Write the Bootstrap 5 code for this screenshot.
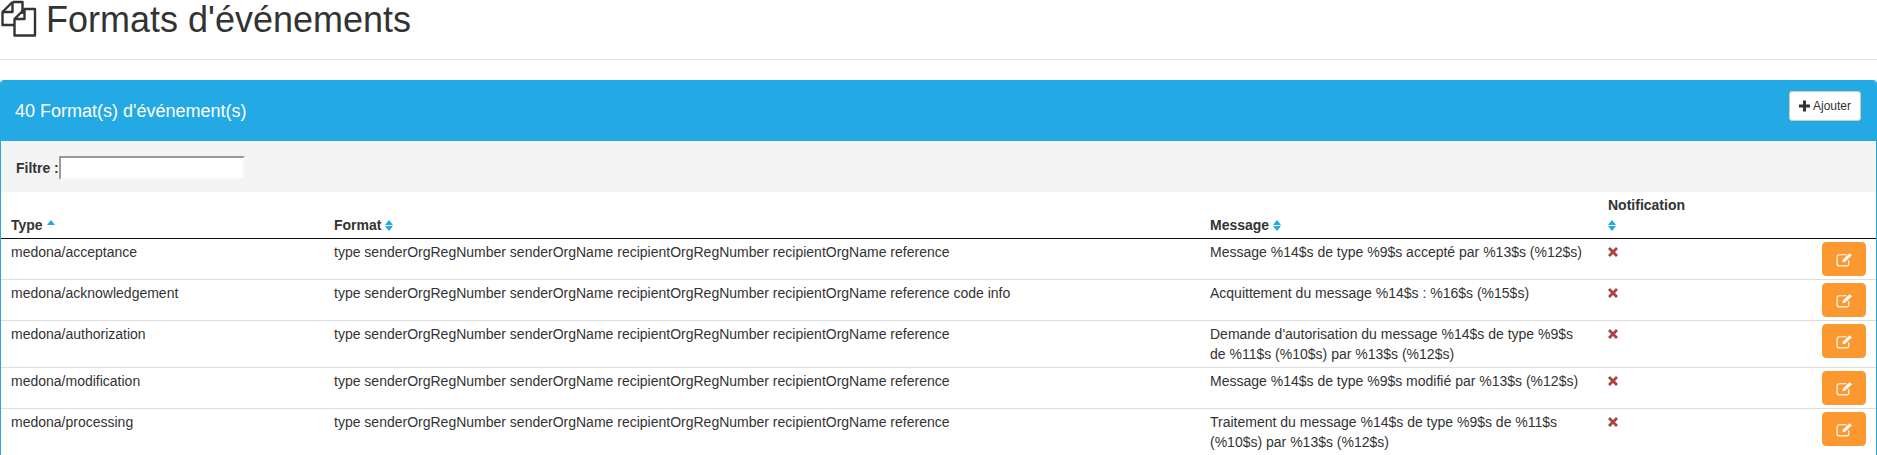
<!DOCTYPE html>
<html lang="fr">
<head>
<meta charset="utf-8">
<title>Formats d'événements</title>
<link href="https://cdn.jsdelivr.net/npm/bootstrap@5.3.0/dist/css/bootstrap.min.css" rel="stylesheet">
<style>
html,body{height:455px;overflow:hidden}
body{font-family:"Liberation Sans",Arial,sans-serif;font-size:14px;line-height:20px;color:#333;background:#fff}
.page-head{height:60px;border-bottom:1px solid #d5e8ee;margin-bottom:20px;gap:9px}
.page-head h1{font-size:36px;line-height:40px;font-weight:400;margin:0;color:#333;font-family:inherit}
.page-head svg{width:37px;height:37px;flex:none}
.ev-panel{border:1px solid #23a9e3;border-bottom:0;border-radius:4px 4px 0 0;height:375px;overflow:hidden}
.ev-title{background:#23a9e3;color:#fff;height:61px;padding:0 16px 0 15px;margin:-1px -1px 0;border-radius:4px 4px 0 0;font-size:18px}
.add-btn{background:#fff;border:1px solid #ccc;border-radius:3px;color:#333;font-size:12px;line-height:18px;padding:0 9px;height:30px;width:72px;margin-top:-9px;display:flex;align-items:center;gap:3px}
.filter-bar{background:#f4f4f4;height:51px;padding:3px 15px 0;font-weight:700}
.filter-bar input{width:186px;height:24px;padding:1px 2px;border-width:2px;border-style:solid;border-color:#9a9a9a #f6f6f6 #f6f6f6 #9a9a9a;background:#fff;border-radius:0}
.ev-table{table-layout:fixed;width:100%;margin:0;color:#333;--bs-table-color:#333}
.ev-table th,.ev-table td{padding:3px 10px;line-height:20px;vertical-align:top;border-bottom:1px solid #ddd;box-shadow:none}
.ev-table thead th{vertical-align:bottom;border-bottom:1px solid #111;font-weight:700}
.w-type{width:323px}.w-format{width:876px}.w-msg{width:398px}.w-notif{width:106px}
.sort-ic{width:8px;height:11px;vertical-align:-1px}
.no-ic{width:10px;height:10px;margin:5px 0 0 0;display:block}
.edit-btn{background:#fb982f;border:1px solid #fb982f;border-radius:4px;width:44px;height:34px;padding:0;display:flex;align-items:center;justify-content:center;margin-left:auto}
.edit-btn svg{width:17px;height:15px}
</style>
</head>
<body>
<header class="page-head d-flex align-items-start">
<svg viewBox="0 0 36 37" fill="none" stroke="#333" stroke-width="2.4" stroke-linejoin="round">
<path d="M12 2H22V14"/><path d="M12 2L2 12V25H14"/><path d="M12 2V12H2"/>
<path d="M24 9H34.5V35.5H14V19Z" /><path d="M24 9V19H14"/>
</svg>
<h1>Formats d'événements</h1>
</header>
<main class="ev-panel">
<div class="ev-title d-flex align-items-center justify-content-between">
<span>40 Format(s) d'événement(s)</span>
<button type="button" class="add-btn"><svg width="12" height="12" viewBox="0 0 11 11"><path d="M4 0H7V4H11V7H7V11H4V7H0V4H4Z" fill="#333"/></svg>Ajouter</button>
</div>
<div class="filter-bar d-flex align-items-center"><label for="flt">Filtre :</label><input id="flt" type="text"></div>
<table class="table ev-table">
<colgroup><col class="w-type"><col class="w-format"><col class="w-msg"><col class="w-notif"><col></colgroup>
<thead><tr>
<th>Type <svg class="sort-ic" viewBox="0 0 8 11"><path d="M0 5L4 0L8 5Z" fill="#23a9e3"/></svg></th>
<th>Format <svg class="sort-ic" viewBox="0 0 8 11"><path d="M0 5L4 0L8 5ZM0 6H8L4 11Z" fill="#23a9e3"/></svg></th>
<th>Message <svg class="sort-ic" viewBox="0 0 8 11"><path d="M0 5L4 0L8 5ZM0 6H8L4 11Z" fill="#23a9e3"/></svg></th>
<th>Notification <svg class="sort-ic" viewBox="0 0 8 11"><path d="M0 5L4 0L8 5ZM0 6H8L4 11Z" fill="#23a9e3"/></svg></th>
<th></th>
</tr></thead>
<tbody>
<tr><td>medona/acceptance</td><td>type senderOrgRegNumber senderOrgName recipientOrgRegNumber recipientOrgName reference</td><td>Message %14$s de type %9$s accepté par %13$s (%12$s)</td><td><svg class="no-ic" viewBox="0 0 11 11"><path d="M2.200 0L5.500 3.300L8.800 0L11 2.200L7.700 5.500L11 8.800L8.800 11L5.500 7.700L2.200 11L0 8.800L3.300 5.500L0 2.200Z" fill="#a94442"/></svg></td><td><button type="button" class="edit-btn" aria-label="Modifier"><svg viewBox="0 0 16 14" fill="none" stroke="#fff" stroke-width="1.100"><path d="M10 2.500H3A2 2 0 0 0 1 4.500V11A2 2 0 0 0 3 13H10A2 2 0 0 0 12 11V8"/><path d="M6 9.500L6.500 7L12.800 1L15 3.100L8.600 9Z" fill="#fff" stroke="none"/></svg></button></td></tr>
<tr><td>medona/acknowledgement</td><td>type senderOrgRegNumber senderOrgName recipientOrgRegNumber recipientOrgName reference code info</td><td>Acquittement du message %14$s : %16$s (%15$s)</td><td><svg class="no-ic" viewBox="0 0 11 11"><path d="M2.200 0L5.500 3.300L8.800 0L11 2.200L7.700 5.500L11 8.800L8.800 11L5.500 7.700L2.200 11L0 8.800L3.300 5.500L0 2.200Z" fill="#a94442"/></svg></td><td><button type="button" class="edit-btn" aria-label="Modifier"><svg viewBox="0 0 16 14" fill="none" stroke="#fff" stroke-width="1.100"><path d="M10 2.500H3A2 2 0 0 0 1 4.500V11A2 2 0 0 0 3 13H10A2 2 0 0 0 12 11V8"/><path d="M6 9.500L6.500 7L12.800 1L15 3.100L8.600 9Z" fill="#fff" stroke="none"/></svg></button></td></tr>
<tr><td>medona/authorization</td><td>type senderOrgRegNumber senderOrgName recipientOrgRegNumber recipientOrgName reference</td><td>Demande d'autorisation du message %14$s de type %9$s de %11$s (%10$s) par %13$s (%12$s)</td><td><svg class="no-ic" viewBox="0 0 11 11"><path d="M2.200 0L5.500 3.300L8.800 0L11 2.200L7.700 5.500L11 8.800L8.800 11L5.500 7.700L2.200 11L0 8.800L3.300 5.500L0 2.200Z" fill="#a94442"/></svg></td><td><button type="button" class="edit-btn" aria-label="Modifier"><svg viewBox="0 0 16 14" fill="none" stroke="#fff" stroke-width="1.100"><path d="M10 2.500H3A2 2 0 0 0 1 4.500V11A2 2 0 0 0 3 13H10A2 2 0 0 0 12 11V8"/><path d="M6 9.500L6.500 7L12.800 1L15 3.100L8.600 9Z" fill="#fff" stroke="none"/></svg></button></td></tr>
<tr><td>medona/modification</td><td>type senderOrgRegNumber senderOrgName recipientOrgRegNumber recipientOrgName reference</td><td>Message %14$s de type %9$s modifié par %13$s (%12$s)</td><td><svg class="no-ic" viewBox="0 0 11 11"><path d="M2.200 0L5.500 3.300L8.800 0L11 2.200L7.700 5.500L11 8.800L8.800 11L5.500 7.700L2.200 11L0 8.800L3.300 5.500L0 2.200Z" fill="#a94442"/></svg></td><td><button type="button" class="edit-btn" aria-label="Modifier"><svg viewBox="0 0 16 14" fill="none" stroke="#fff" stroke-width="1.100"><path d="M10 2.500H3A2 2 0 0 0 1 4.500V11A2 2 0 0 0 3 13H10A2 2 0 0 0 12 11V8"/><path d="M6 9.500L6.500 7L12.800 1L15 3.100L8.600 9Z" fill="#fff" stroke="none"/></svg></button></td></tr>
<tr><td>medona/processing</td><td>type senderOrgRegNumber senderOrgName recipientOrgRegNumber recipientOrgName reference</td><td>Traitement du message %14$s de type %9$s de %11$s (%10$s) par %13$s (%12$s)</td><td><svg class="no-ic" viewBox="0 0 11 11"><path d="M2.200 0L5.500 3.300L8.800 0L11 2.200L7.700 5.500L11 8.800L8.800 11L5.500 7.700L2.200 11L0 8.800L3.300 5.500L0 2.200Z" fill="#a94442"/></svg></td><td><button type="button" class="edit-btn" aria-label="Modifier"><svg viewBox="0 0 16 14" fill="none" stroke="#fff" stroke-width="1.100"><path d="M10 2.500H3A2 2 0 0 0 1 4.500V11A2 2 0 0 0 3 13H10A2 2 0 0 0 12 11V8"/><path d="M6 9.500L6.500 7L12.800 1L15 3.100L8.600 9Z" fill="#fff" stroke="none"/></svg></button></td></tr>
</tbody>
</table>
</main>
<script src="https://cdn.jsdelivr.net/npm/bootstrap@5.3.0/dist/js/bootstrap.bundle.min.js"></script>
</body>
</html>
